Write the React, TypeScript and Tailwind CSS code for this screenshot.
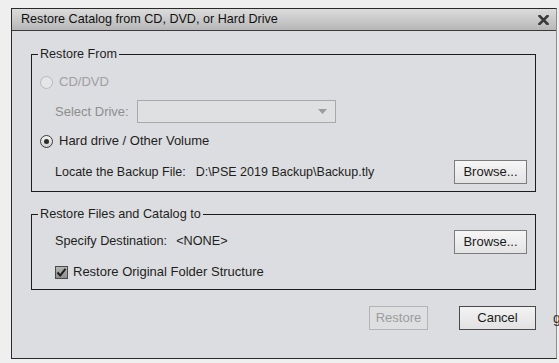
import React from "react";

function Radio({ checked, disabled }: { checked?: boolean; disabled?: boolean }) {
  return (
    <span
      className={
        "w-[13px] h-[13px] rounded-full border flex items-center justify-center shrink-0 " +
        (disabled
          ? "border-[#b9b9b9] bg-[#e4e5e7]"
          : "border-[#3c3c3c] border-[1.5px] bg-gradient-to-b from-[#f2f2f2] to-[#cfcfcf]")
      }
    >
      {checked && <span className="w-[5px] h-[5px] rounded-full bg-[#2c2c2c]" />}
    </span>
  );
}

function Button({
  children,
  width,
  variant = "normal",
}: {
  children: React.ReactNode;
  width: string;
  variant?: "normal" | "disabled" | "default";
}) {
  const cls =
    variant === "disabled"
      ? "border-[#b4b4b4] text-[#9c9c9c] bg-[#dedfe1]"
      : variant === "default"
      ? "border-[#4a4a4a] text-[#1a1a1a] bg-gradient-to-b from-[#f3f3f3] to-[#e2e2e2]"
      : "border-[#7c7c7c] text-[#1a1a1a] bg-gradient-to-b from-[#f6f6f6] to-[#e3e3e3]";
  return (
    <div className={"h-[24px] border flex items-center justify-center text-[13px] shrink-0 " + width + " " + cls}>
      {children}
    </div>
  );
}

export default function App() {
  return (
    <div className="relative w-[559px] h-[363px] overflow-hidden bg-[#efefef] pt-[8px] pl-[11px] font-['Liberation_Sans',Arial,sans-serif] text-[#1e1e1e]">
      <div className="w-[546px] h-[351px] border border-[#2a2a2a] border-r-[#8e8e8e] bg-[#dcdde0] flex flex-col">
        {/* title bar */}
        <div className="h-[22px] shrink-0 border-b border-[#3a3a3a] bg-gradient-to-b from-[#dcdcdc] to-[#b7b7b7] flex items-center justify-between pl-[9px] pr-[7px]">
          <span className="text-[12.6px] leading-[15px] text-[#111]">Restore Catalog from CD, DVD, or Hard Drive</span>
          <svg width="11" height="10" viewBox="0 0 11 10" className="mt-[1px]">
            <path d="M1.5 1 L9.5 9 M9.5 1 L1.5 9" stroke="#3a3a3a" strokeWidth="2.6" strokeLinecap="square" />
          </svg>
        </div>

        <div className="pt-[16px] pl-[19px] flex flex-col">
          {/* Restore From */}
          <fieldset className="w-[505px] border border-[#1c1c1c] pb-[7px]">
            <legend className="ml-[6px] px-[2px] text-[12.6px] leading-[15px]">Restore From</legend>
            <div className="flex flex-col pl-[8px] pr-[8px]">
              <div className="mt-[10px] h-[20px] flex items-center gap-[6px] text-[13px] text-[#a0a0a0]">
                <Radio disabled />
                <span>CD/DVD</span>
              </div>
              <div className="mt-[8px] h-[23px] flex items-center pl-[15px] text-[13px]">
                <span className="w-[82px] text-[#8e8e8e]">Select Drive:</span>
                <div className="w-[199px] h-[23px] border border-[#a9a9a9] bg-[#dfe0e2] flex items-center justify-end pr-[8px]">
                  <svg width="9" height="5" viewBox="0 0 9 5">
                    <path d="M0 0 L9 0 L4.5 5 Z" fill="#9c9c9c" />
                  </svg>
                </div>
              </div>
              <div className="mt-[8px] h-[20px] flex items-center gap-[6px] text-[13px]">
                <Radio checked />
                <span>Hard drive / Other Volume</span>
              </div>
              <div className="mt-[9px] flex items-center justify-between pl-[15px] text-[12.5px]">
                <span className="whitespace-pre">
                  Locate the Backup File:<span className="ml-[10px]">D:\PSE 2019 Backup\Backup.tly</span>
                </span>
                <Button width="w-[73px]">Browse...</Button>
              </div>
            </div>
          </fieldset>

          {/* Restore Files and Catalog to */}
          <fieldset className="mt-[15px] w-[505px] border border-[#1c1c1c] pb-[9px]">
            <legend className="ml-[6px] px-[2px] text-[12.7px] leading-[15px]">Restore Files and Catalog to</legend>
            <div className="flex flex-col pl-[23px] pr-[8px]">
              <div className="mt-[8px] flex items-center justify-between text-[12.7px]">
                <span className="whitespace-pre">
                  Specify Destination:<span className="ml-[9px]">&lt;NONE&gt;</span>
                </span>
                <Button width="w-[73px]">Browse...</Button>
              </div>
              <div className="mt-[10px] h-[16px] flex items-center gap-[5px] text-[13px]">
                <span className="w-[13px] h-[13px] border border-[#4a4a4a] bg-gradient-to-b from-[#b5b5b5] to-[#8e8e8e] flex items-center justify-center">
                  <svg width="11" height="11" viewBox="0 0 11 11">
                    <path d="M1.5 5.5 L4.2 8.5 L9.5 1.8" stroke="#1e1e1e" strokeWidth="2" fill="none" />
                  </svg>
                </span>
                <span>Restore Original Folder Structure</span>
              </div>
            </div>
          </fieldset>

          {/* bottom buttons */}
          <div className="mt-[16px] w-[505px] flex justify-end gap-[31px]">
            <Button width="w-[59px]" variant="disabled">Restore</Button>
            <Button width="w-[77px]" variant="default">Cancel</Button>
          </div>
        </div>
      </div>
      <span className="absolute left-[553px] top-[308px] text-[14px] text-[#333]">g</span>
    </div>
  );
}
